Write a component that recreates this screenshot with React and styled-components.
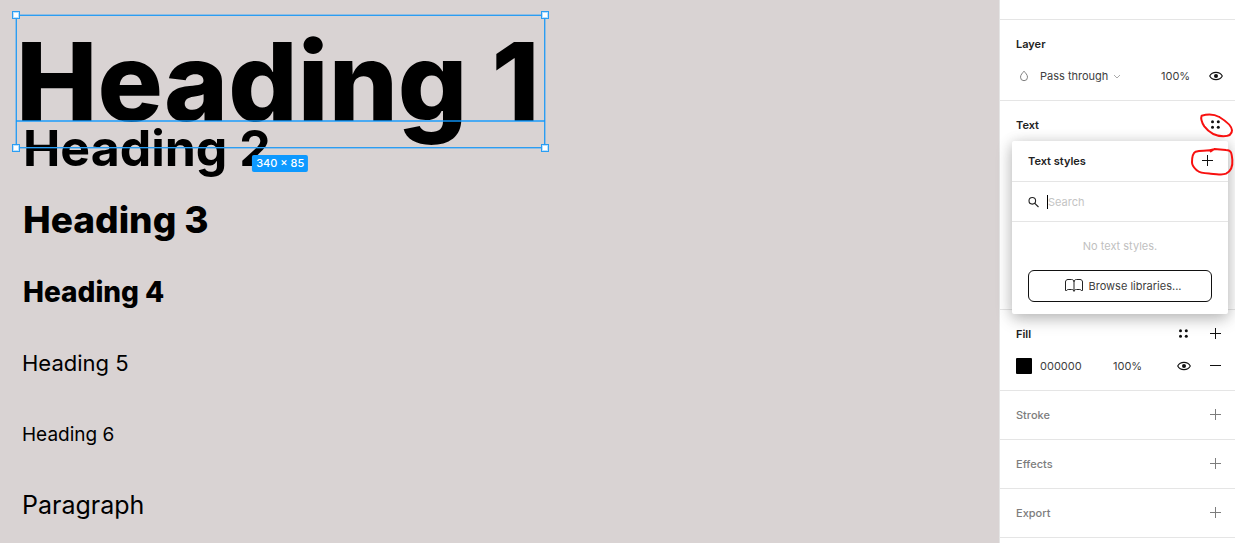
import React from "react";
import styled, { createGlobalStyle } from "styled-components";

const GlobalStyle = createGlobalStyle`
  * { box-sizing: border-box; }
  body {
    margin: 0;
    background: #d9d3d3;
    color: #000;
    font-family: Inter, "Liberation Sans", sans-serif;
  }
  button, input, select { font: inherit; letter-spacing: inherit; color: inherit; }
`;

const Page = styled.div`
  display: flex;
  min-height: 100vh;
`;

const Canvas = styled.main`
  flex: 1;
  min-width: 0;
  display: flex;
  flex-direction: column;
  align-items: flex-start;
  padding: 15px 16px 0;
`;

const Selection = styled.div`
  position: relative;
  z-index: 1;
  margin-bottom: -36px;
`;

const SelectedHeading = styled.h1`
  margin: 0;
  padding-right: 5px;
  font-size: 109px;
  line-height: 133px;
  font-weight: 800;
  white-space: nowrap;
`;

const Outline = styled.div`
  position: absolute;
  inset: 0;
  border: 1px solid #2b9df2;
  box-shadow: 0 0 0 1px rgba(13, 153, 255, 0.35);
`;

const Baseline = styled.div`
  position: absolute;
  left: 0;
  right: 0;
  bottom: 26px;
  height: 2px;
  background: rgba(13, 153, 255, 0.7);
`;

const Handle = styled.span`
  position: absolute;
  width: 8px;
  height: 8px;
  border: 1px solid #2b9df2;
  background: #fff;
  box-shadow: inset 0 0 0 1px rgba(13, 153, 255, 0.3);
  ${(p) => (p.$bottom ? "bottom: -4px;" : "top: -4px;")}
  ${(p) => (p.$right ? "right: -4px;" : "left: -4px;")}
`;

const SizeBadge = styled.span`
  position: absolute;
  top: calc(100% + 7px);
  left: 50%;
  transform: translateX(-50%);
  padding: 0 4px;
  border-radius: 2px;
  background: #0d99ff;
  color: #fff;
  font-size: 11px;
  line-height: 17px;
  font-weight: 500;
  white-space: nowrap;
`;

const Sample = styled.p`
  margin: 0 0 0 ${(p) => (p.$weight > 400 ? 7 : 6)}px;
  font-size: ${(p) => p.$size}px;
  font-weight: ${(p) => p.$weight};
  line-height: ${(p) => (p.$weight > 400 ? 72 : 71)}px;
  white-space: nowrap;
`;

const Sidebar = styled.aside`
  position: relative;
  flex: 0 0 236px;
  border-left: 1px solid #e5e5e5;
  background: #fff;
  color: #404040;
  font-size: 11px;
  line-height: 16px;
`;

const TopStrip = styled.div`
  height: 20px;
  border-bottom: 1px solid #e5e5e5;
`;

const Section = styled.section`
  position: relative;
  min-height: ${(p) => (p.$tall ? 209 : 49)}px;
  padding: 8px 4px 8px 16px;
  border-bottom: 1px solid #e5e5e5;
`;

const Row = styled.div`
  display: flex;
  align-items: center;
  height: 32px;
`;

const Title = styled.h2`
  margin: 0 auto 0 0;
  font-size: 11px;
  line-height: 16px;
  font-weight: ${(p) => (p.$muted ? 500 : 600)};
  color: ${(p) => (p.$muted ? "#7d7d7d" : "#222")};
`;

const IconButton = styled.button`
  flex: none;
  display: block;
  width: 32px;
  height: 32px;
  padding: 0;
  border: 0;
  background: none;
  color: ${(p) => (p.$muted ? "#7d7d7d" : "#111")};

  svg { display: block; }
`;

const BlendIcon = styled.svg`
  flex: none;
  width: 16px;
  height: 16px;
  margin-right: 8px;
`;

const BlendSelect = styled.select`
  appearance: none;
  border: 0;
  padding: 0;
  background: none;
  width: 72px;
`;

const Chevron = styled.svg`
  flex: none;
  width: 10px;
  height: 16px;
  pointer-events: none;
`;

const Swatch = styled.button`
  flex: none;
  width: 16px;
  height: 16px;
  margin-right: 8px;
  padding: 0;
  border: 0;
  border-radius: 1px;
  background: #000;
`;

const HexInput = styled.input`
  width: 73px;
  padding: 0;
  border: 0;
  background: none;
`;

const Opacity = styled.input`
  width: 32px;
  margin: ${(p) => (p.$start ? "0 auto 0 0" : "0 6px 0 auto")};
  padding: 0;
  border: 0;
  background: none;
`;

const Popover = styled.div`
  position: absolute;
  z-index: 2;
  top: 40px;
  left: 12px;
  right: 7px;
  border-radius: 2px;
  background: #fff;
  box-shadow: 0 2px 14px rgba(0, 0, 0, 0.15), 0 5px 17px rgba(0, 0, 0, 0.2);
`;

const PopoverBar = styled.div`
  display: flex;
  align-items: center;
  height: ${(p) => (p.$header ? 41 : 40)}px;
  padding: 0 5px 0 16px;
  border-bottom: 1px solid #e5e5e5;
`;

const SearchIcon = styled.svg`
  flex: none;
  width: 12px;
  height: 16px;
  margin-right: 7px;
`;

const SearchField = styled.input`
  flex: 1;
  min-width: 0;
  height: 14px;
  padding: 0;
  border: 0;
  border-left: 1px solid #000;
  outline: 0;
  background: none;

  &::placeholder { color: #c4c4c4; opacity: 1; }
`;

const PopoverBody = styled.div`
  padding: 16px 16px 12px;
  text-align: center;
`;

const Empty = styled.p`
  margin: 0 0 16px;
  color: #bfbfbf;
`;

const BrowseButton = styled.button`
  display: flex;
  align-items: center;
  justify-content: center;
  gap: 6px;
  width: 100%;
  height: 32px;
  padding: 0 0 0 6px;
  border: 1px solid #111;
  border-radius: 6px;
  background: #fff;
`;

const Markup = styled.svg`
  position: absolute;
  z-index: 3;
  top: 110px;
  right: 0;
  width: 45px;
  height: 70px;
  pointer-events: none;
`;

const icons = {
  plus: <path d="M11 15.5h11M16.5 10v11" stroke="currentColor" />,
  minus: <path d="M11 15.5h11" stroke="currentColor" />,
  dots: (
    <g fill="currentColor">
      <circle cx="13.5" cy="12.7" r="1.5" />
      <circle cx="19.3" cy="12.7" r="1.5" />
      <circle cx="13.5" cy="18.3" r="1.5" />
      <circle cx="19.3" cy="18.3" r="1.5" />
    </g>
  ),
  eye: (
    <g>
      <path d="M10.7 16C13.3 11.2 20.7 11.2 23.3 16C20.7 20.8 13.3 20.8 10.7 16Z" fill="none" stroke="currentColor" strokeWidth="1.1" />
      <circle cx="17" cy="16" r="2" fill="currentColor" />
    </g>
  ),
};

function Action({ icon, label, muted }) {
  return (
    <IconButton type="button" aria-label={label} $muted={muted}>
      <svg width="32" height="32" viewBox="0 0 32 32">{icons[icon]}</svg>
    </IconButton>
  );
}

const samples = [
  { text: "Heading 2", size: 50, weight: 700, tag: "h2" },
  { text: "Heading 3", size: 37, weight: 800, tag: "h3" },
  { text: "Heading 4", size: 28, weight: 800, tag: "h4" },
  { text: "Heading 5", size: 22, weight: 400, tag: "h5" },
  { text: "Heading 6", size: 19, weight: 400, tag: "h6" },
  { text: "Paragraph", size: 25, weight: 400, tag: "p" },
];

export default function App() {
  return (
    <Page>
      <GlobalStyle />
      <Canvas>
        <Selection>
          <SelectedHeading>Heading 1</SelectedHeading>
          <Outline />
          <Baseline />
          <Handle />
          <Handle $right />
          <Handle $bottom />
          <Handle $bottom $right />
          <SizeBadge>340 × 85</SizeBadge>
        </Selection>
        {samples.map((s) => (
          <Sample key={s.text} as={s.tag} $size={s.size} $weight={s.weight}>{s.text}</Sample>
        ))}
      </Canvas>

      <Sidebar>
        <TopStrip />
        <Section>
          <Row><Title>Layer</Title></Row>
          <Row>
            <BlendIcon viewBox="0 0 16 16">
              <path d="M8 3.2C6.6 5 4.5 6.7 4.5 9.2a3.5 3.5 0 0 0 7 0C11.5 6.7 9.4 5 8 3.2Z" fill="none" stroke="#808080" />
            </BlendIcon>
            <BlendSelect aria-label="Blend mode" defaultValue="pass">
              <option value="pass">Pass through</option>
            </BlendSelect>
            <Chevron viewBox="0 0 10 16">
              <path d="M2 7l3 3 3-3" fill="none" stroke="#aaa" />
            </Chevron>
            <Opacity aria-label="Layer opacity" defaultValue="100%" />
            <Action icon="eye" label="Toggle layer visibility" />
          </Row>
        </Section>

        <Section $tall>
          <Row>
            <Title>Text</Title>
            <Action icon="dots" label="Text styles" />
          </Row>
          <Popover role="dialog" aria-label="Text styles">
            <PopoverBar $header>
              <Title>Text styles</Title>
              <Action icon="plus" label="Create text style" />
            </PopoverBar>
            <PopoverBar>
              <SearchIcon viewBox="0 0 12 16">
                <circle cx="4.3" cy="6.8" r="3.3" fill="none" stroke="#222" strokeWidth="1.1" />
                <path d="M6.8 9.3l3.7 3.7" stroke="#222" strokeWidth="1.1" />
              </SearchIcon>
              <SearchField type="text" aria-label="Search text styles" placeholder="Search" />
            </PopoverBar>
            <PopoverBody>
              <Empty>No text styles.</Empty>
              <BrowseButton type="button">
                <svg width="18" height="14" viewBox="0 0 18 14" fill="none" stroke="#222">
                  <path d="M9 12.3V3C9 1.5 8 .5 6.5.5H3C1.5.5.5 1.5.5 3v8.5h1.2c.3-.7.8-1 1.5-1H6.5c1.5 0 2.5.6 2.5 1.8c0-1.2 1-1.8 2.5-1.8h3.3c.7 0 1.2.3 1.5 1h1.2V3c0-1.5-1-2.5-2.5-2.5h-3.5C10 .5 9 1.5 9 3" />
                </svg>
                Browse libraries...
              </BrowseButton>
            </PopoverBody>
          </Popover>
        </Section>

        <Section>
          <Row>
            <Title>Fill</Title>
            <Action icon="dots" label="Fill styles" />
            <Action icon="plus" label="Add fill" />
          </Row>
          <Row>
            <Swatch type="button" aria-label="Fill colour" />
            <HexInput aria-label="Hex value" defaultValue="000000" />
            <Opacity aria-label="Fill opacity" defaultValue="100%" $start />
            <Action icon="eye" label="Toggle fill visibility" />
            <Action icon="minus" label="Remove fill" />
          </Row>
        </Section>

        {["Stroke", "Effects", "Export"].map((name) => (
          <Section key={name}>
            <Row>
              <Title $muted>{name}</Title>
              <Action icon="plus" label={`Add ${name}`} muted />
            </Row>
          </Section>
        ))}

        <Markup viewBox="600 30 135 210" fill="none" stroke="#f8100f" strokeWidth="6" strokeLinecap="round" strokeLinejoin="round">
          <path d="M688 51C672 42 652 42 635 47C631 57 637 70 643 79C655 95 676 108 700 109C716 109 726 103 726 91C725 76 706 62 688 51" />
          <path d="M662 154L673 147L708 150C724 151 725 158 727 180C729 204 722 214 708 221C696 226 684 222 662 221C644 220 630 220 622 212C613 204 606 200 606 187C606 171 607 160 617 155C635 151 652 154 673 148" />
        </Markup>
      </Sidebar>
    </Page>
  );
}
